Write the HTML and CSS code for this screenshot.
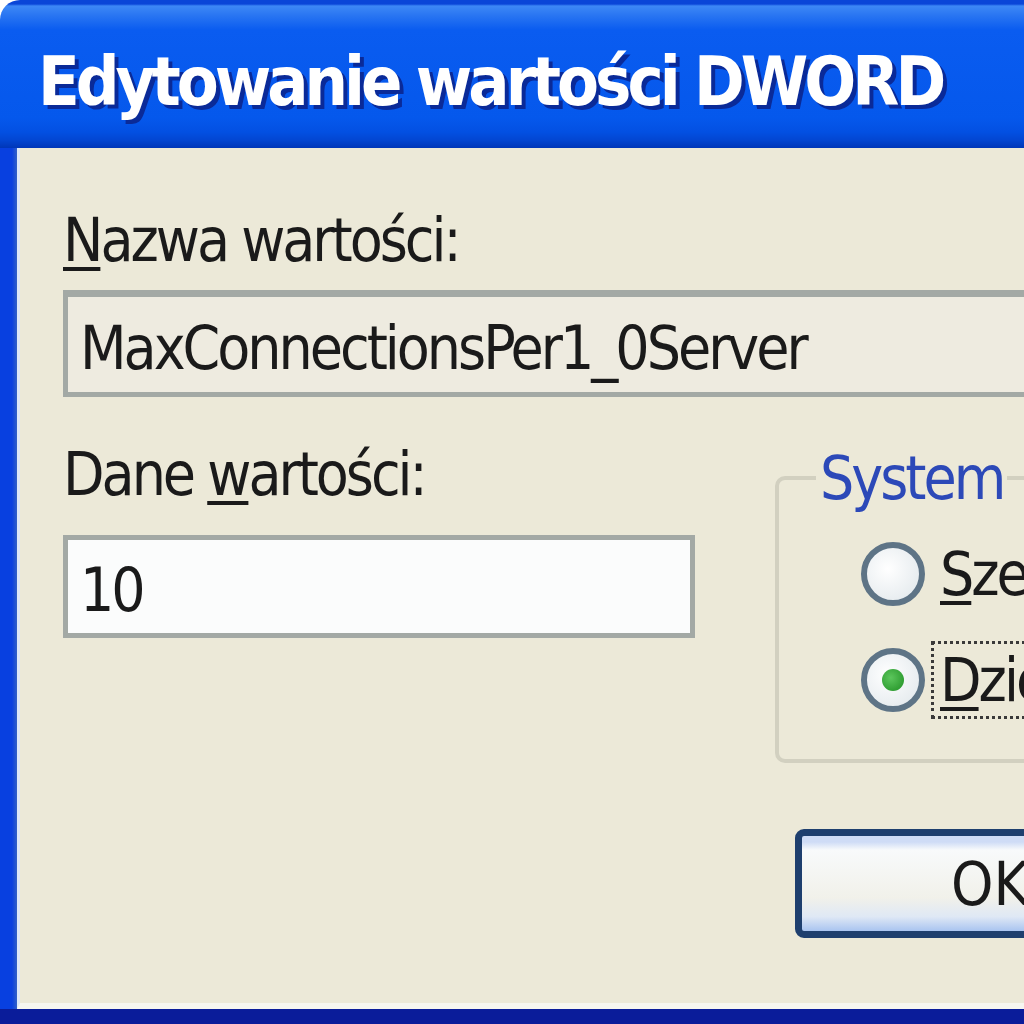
FILE: index.html
```html
<!doctype html>
<html>
  <head>
    <meta charset="utf-8">
    <link rel="stylesheet" href="styles.css">
    <title>Edytowanie wartości DWORD</title>
  </head>
  <body>
    <div class="window">
      <div class="titlebar">
        <span class="title">Edytowanie wartości DWORD</span>
      </div>
      <div class="frame">
        <div class="client">
          <label class="label"><u>N</u>azwa wartości:</label>
          <div class="field readonly">MaxConnectionsPer1_0Server</div>
          <div class="row">
            <div class="data">
              <label class="label">Dane <u>w</u>artości:</label>
              <div class="field edit">10</div>
            </div>
            <fieldset class="group">
              <legend>System</legend>
              <div class="radios">
                <div class="radio"><span class="dot"></span><span class="rlabel"><u>S</u>zesnastkowy</span></div>
                <div class="radio checked"><span class="dot"></span><span class="rlabel focus"><u>D</u>ziesiętny</span></div>
              </div>
            </fieldset>
          </div>
          <div class="buttons">
            <button class="btn default">OK</button>
            <button class="btn">Anuluj</button>
          </div>
        </div>
      </div>
    </div>
  </body>
</html>
```

FILE: styles.css
```css
body {
  margin: 0;
  background: #ffffff;
  overflow: hidden;
  font-family: "DejaVu Sans Condensed", "Liberation Sans", sans-serif;
}
.window {
  width: 1400px;
  height: 1024px;
  display: flex;
  flex-direction: column;
  border-top-left-radius: 20px;
  overflow: hidden;
}
.titlebar {
  height: 148px;
  flex: none;
  box-sizing: border-box;
  padding: 14px 0 0 38px;
  display: flex;
  align-items: center;
  background: linear-gradient(#0a46d8 0, #0a46d8 4px, #3d88f6 6px, #2a76f2 15px, #0a5cf0 30px, #0558ec 118px, #0350e2 132px, #0346d2 140px, #0036b8 148px);
}
.title {
  color: #ffffff;
  font-weight: bold;
  font-size: 68px;
  letter-spacing: -4px;
  text-shadow: 4px 4px 0 #0a2a98;
}
.frame {
  flex: 1;
  display: flex;
  padding-left: 17px;
  background: linear-gradient(to right, #0840e0 12px, #3060c8 17px);
  border-bottom: 15px solid #0a1c9a;
}
.client {
  flex: 1;
  background: #ece9d8;
  border-left: 3px solid #dce8f8;
  border-bottom: 6px solid #f6f6f0;
  padding: 62px 0 0 43px;
}
.label {
  display: block;
  font-size: 60px;
  line-height: 60px;
  letter-spacing: -3px;
  color: #1a1a1a;
}
u {
  text-decoration-thickness: 4px;
  text-underline-offset: 6px;
}
.field {
  box-sizing: border-box;
  border: 5px solid #a3a9a5;
  font-size: 60px;
  letter-spacing: -3px;
  color: #1a1a1a;
}
.readonly {
  width: 1200px;
  height: 107px;
  margin-top: 20px;
  padding: 7px 0 0 12px;
  line-height: 88px;
  background: #eeebe0;
  border-top-width: 7px;
}
.edit {
  width: 632px;
  height: 103px;
  margin-top: 31px;
  padding: 7px 0 0 12px;
  line-height: 86px;
  background: #fbfcfc;
}
.row {
  display: flex;
  align-items: flex-start;
  gap: 80px;
  margin-top: 47px;
}
.data {
  width: 632px;
  flex: none;
}
.group {
  margin: 4px 0 0 0;
  padding: 0 0 47px 0;
  width: 600px;
  flex: none;
  border: 4px solid #d2d0c0;
  border-radius: 10px;
}
.group legend {
  margin-left: 37px;
  padding: 0 4px;
  font-size: 60px;
  line-height: 60px;
  letter-spacing: -3px;
  color: #2c49b8;
}
.radios {
  display: flex;
  flex-direction: column;
  gap: 42px;
  padding: 34px 0 0 82px;
}
.radio {
  display: flex;
  align-items: center;
  gap: 15px;
  height: 64px;
}
.dot {
  width: 64px;
  height: 64px;
  box-sizing: border-box;
  border: 6px solid #5e7486;
  border-radius: 50%;
  background: radial-gradient(circle at 40% 40%, #ffffff, #dfe6ea);
  display: flex;
  align-items: center;
  justify-content: center;
}
.checked .dot::after {
  content: "";
  width: 22px;
  height: 22px;
  border-radius: 50%;
  background: radial-gradient(circle at 40% 40%, #5cc65c, #1e8e22);
}
.rlabel {
  font-size: 60px;
  line-height: 60px;
  letter-spacing: -3px;
  color: #1a1a1a;
  white-space: nowrap;
}
.focus {
  outline: 3px dotted #3a3a3a;
  outline-offset: 6px;
}
.buttons {
  display: flex;
  gap: 40px;
  margin: 66px 0 0 732px;
}
.btn {
  width: 390px;
  height: 109px;
  flex: none;
  border: 7px solid #1e3f6e;
  border-radius: 9px;
  font-family: inherit;
  font-size: 60px;
  color: #1a1a1a;
  background: linear-gradient(#cfdcf6 0, #cfdcf6 6px, #f8fafb 14px, #f1f1ea 65%, #dfe8f5 85%, #a9c4f0 100%);
}
```
